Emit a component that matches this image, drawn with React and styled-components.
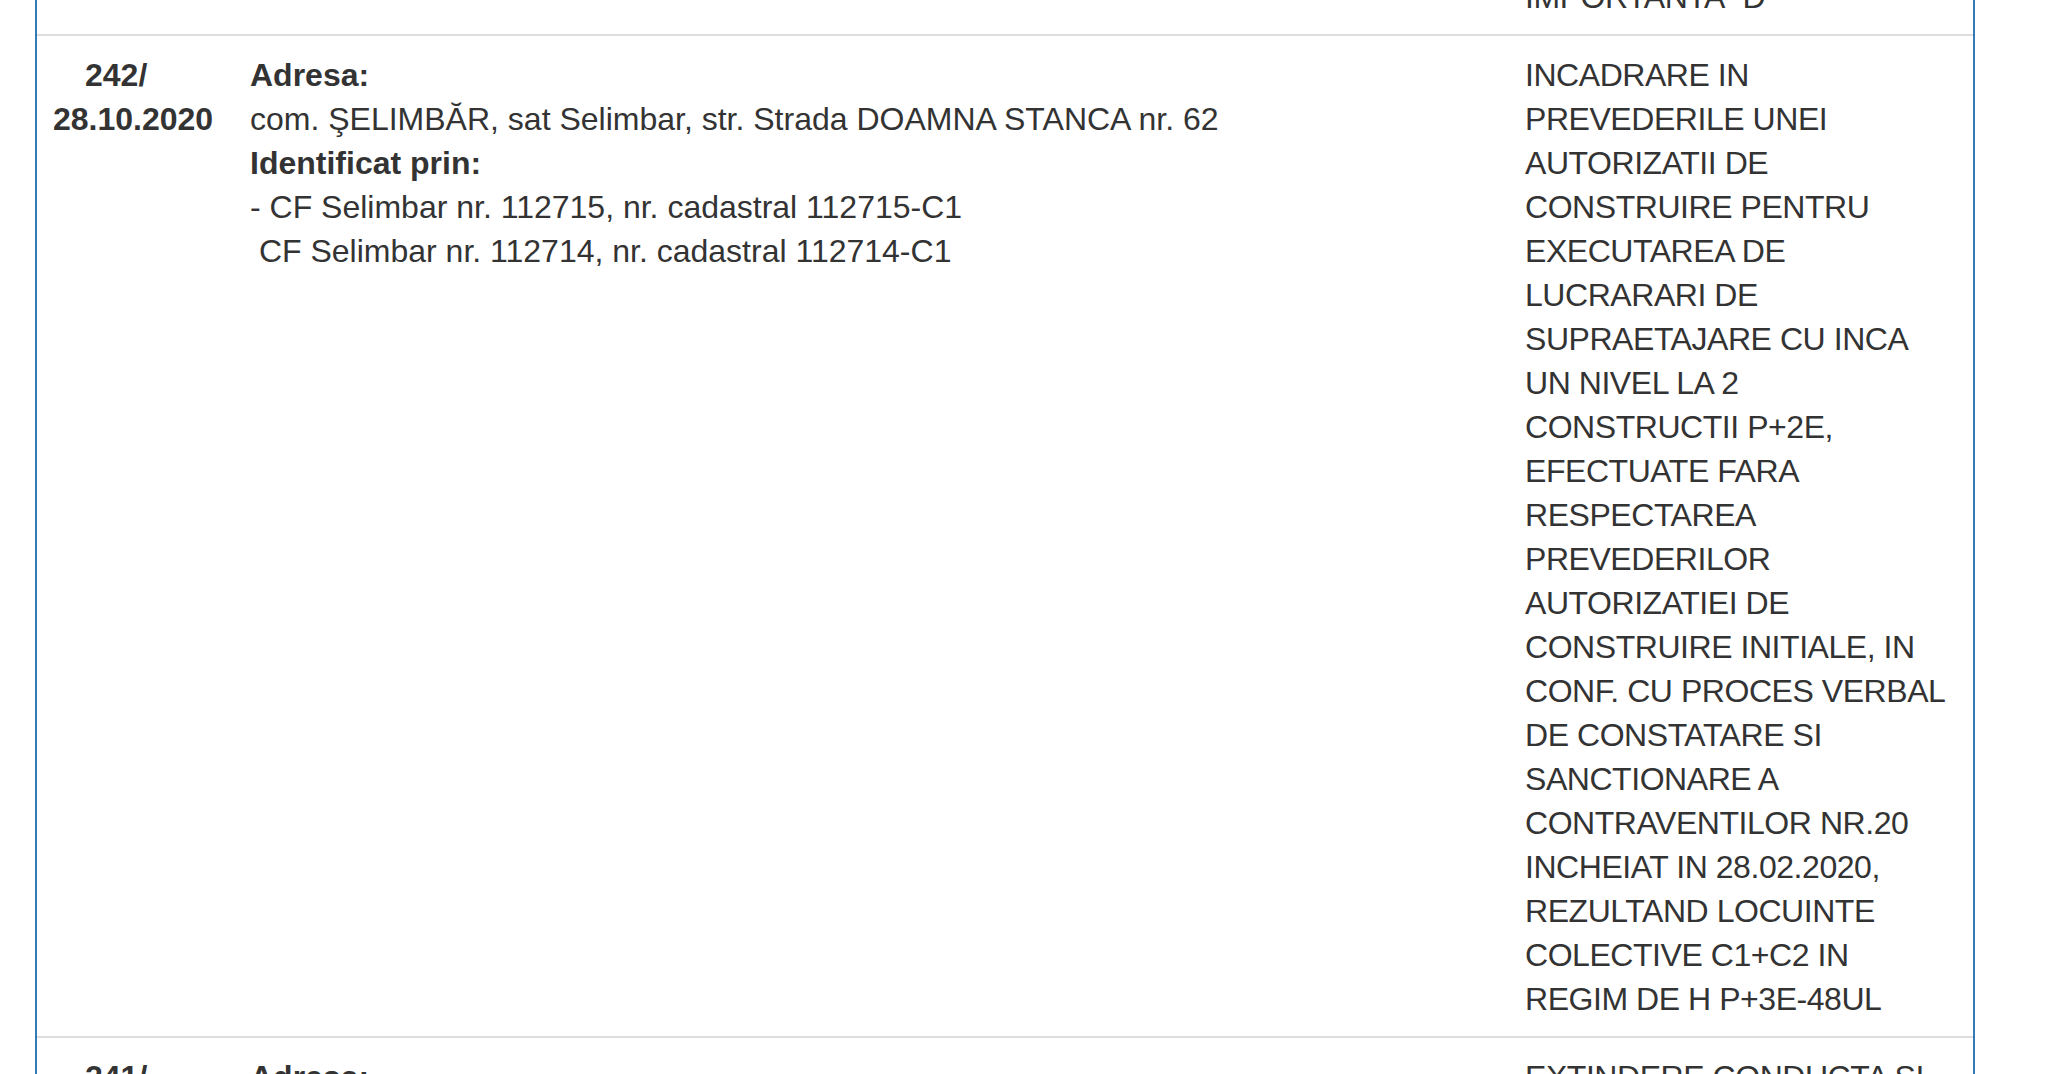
import React from 'react';
import styled, { createGlobalStyle } from 'styled-components';

const GlobalStyle = createGlobalStyle`
  html, body {
    margin: 0;
    padding: 0;
    background: #ffffff;
  }
  body {
    font-family: "Liberation Sans", Arial, Helvetica, sans-serif;
    color: #333333;
    overflow: hidden;
  }
`;

const Table = styled.div`
  box-sizing: border-box;
  width: 1940px;
  margin: -44px 0 0 35px;
  border-left: 2px solid #337ab7;
  border-right: 2px solid #337ab7;
`;

const Row = styled.div`
  display: grid;
  grid-template-columns: 197px 1fr 464px;
  border-top: 2px solid #dddddd;
`;

const Cell = styled.div`
  box-sizing: border-box;
  padding: 17px 16px 15px;
  font-size: 32px;
  line-height: 44px;
  font-weight: ${(p) => (p.$bold ? 700 : 400)};
  min-width: 0;
`;

const DescriptionCell = styled(Cell)`
  padding-right: 24px;
  letter-spacing: -0.45px;
`;

const Line = styled.span`
  display: block;
  font-weight: ${(p) => (p.$bold ? 700 : 'inherit')};
  padding-left: ${(p) => (p.$indent ? '1em' : '0')};
  white-space: ${(p) => (p.$pre ? 'pre' : 'normal')};
`;

const rows = [
  {
    num: '',
    date: '',
    address: null,
    description: 'IMPORTANTA "D"',
  },
  {
    num: '242/',
    date: '28.10.2020',
    address: {
      street: 'com. ŞELIMBĂR, sat Selimbar, str. Strada DOAMNA STANCA nr. 62',
      ids: [
        '- CF Selimbar nr. 112715, nr. cadastral 112715-C1',
        ' CF Selimbar nr. 112714, nr. cadastral 112714-C1',
      ],
    },
    description:
      'INCADRARE IN PREVEDERILE UNEI AUTORIZATII DE CONSTRUIRE PENTRU EXECUTAREA DE LUCRARARI DE SUPRAETAJARE CU INCA UN NIVEL LA 2 CONSTRUCTII P+2E, EFECTUATE FARA RESPECTAREA PREVEDERILOR AUTORIZATIEI DE CONSTRUIRE INITIALE, IN CONF. CU PROCES VERBAL DE CONSTATARE SI SANCTIONARE A CONTRAVENTILOR NR.20 INCHEIAT IN 28.02.2020, REZULTAND LOCUINTE COLECTIVE C1+C2 IN REGIM DE H P+3E-48UL',
  },
  {
    num: '241/',
    date: '28.10.2020',
    address: {
      street: 'com. ŞELIMBĂR, sat Selimbar',
      ids: ['- CF Selimbar'],
    },
    description: 'EXTINDERE CONDUCTA SI BRANSAMENTE',
  },
];

function Address({ data }) {
  if (!data) return null;
  return (
    <>
      <Line $bold>Adresa:</Line>
      <Line>{data.street}</Line>
      <Line $bold>Identificat prin:</Line>
      {data.ids.map((id, i) => (
        <Line key={i} $pre>
          {id}
        </Line>
      ))}
    </>
  );
}

export default function App() {
  return (
    <>
      <GlobalStyle />
      <Table>
        {rows.map((r, i) => (
          <Row key={i}>
            <Cell $bold>
              {r.num && <Line $indent>{r.num}</Line>}
              {r.date && <Line>{r.date}</Line>}
            </Cell>
            <Cell>
              <Address data={r.address} />
            </Cell>
            <DescriptionCell>{r.description}</DescriptionCell>
          </Row>
        ))}
      </Table>
    </>
  );
}
